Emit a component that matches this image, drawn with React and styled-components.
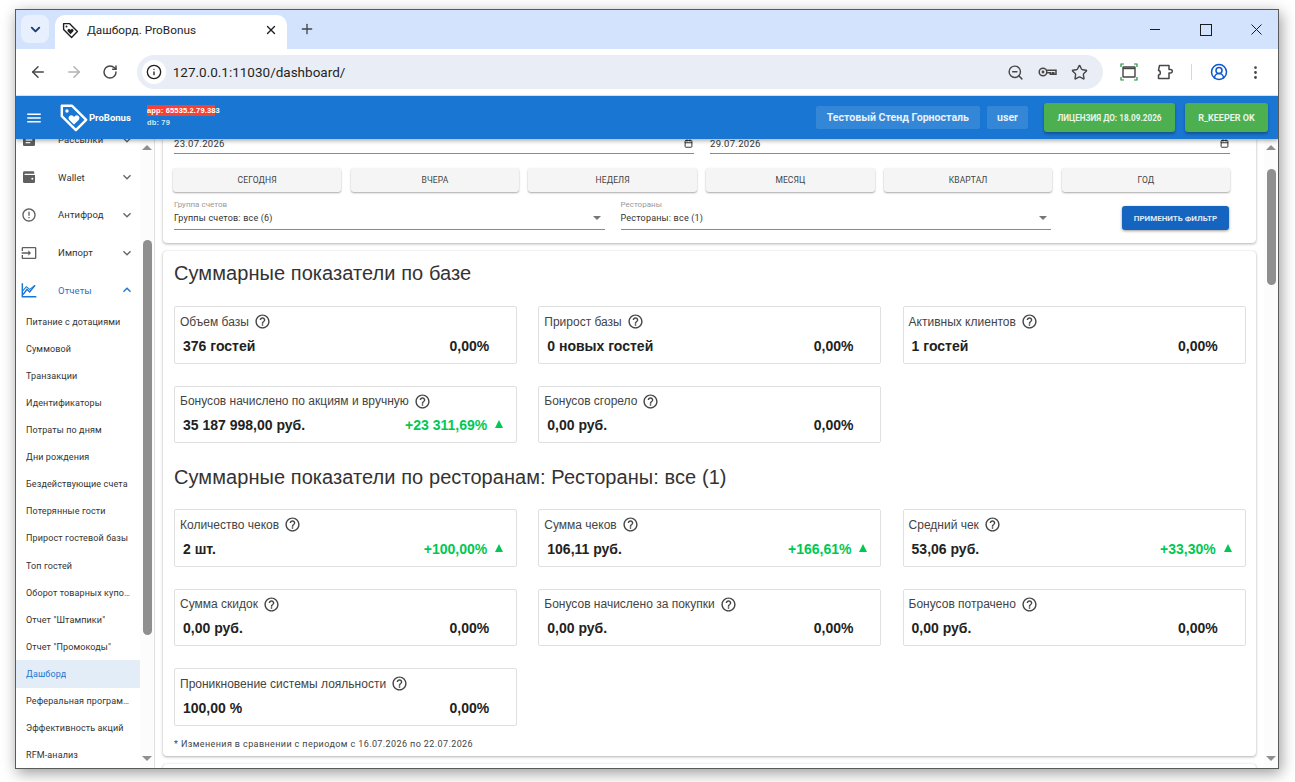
import React from 'react';
import styled, { createGlobalStyle } from 'styled-components';
import { ArrowLeft, ArrowRight, RotateCw, Info, ZoomOut, Star, CircleUserRound, EllipsisVertical, Plus, X, ChevronDown, Calendar } from 'lucide-react';

const GlobalStyle = createGlobalStyle`
  html, body { margin: 0; padding: 0; background: #fff; }
  body { font-family: "Liberation Sans", Arial, sans-serif; }
  * { box-sizing: border-box; }
`;

const Page = styled.div`
  width: 1295px;
  height: 782px;
  padding: 9px 16px 13px 15px;
  overflow: hidden;
`;
const Win = styled.div`
  width: 1264px;
  height: 760px;
  border: 1px solid #5a5a5a;
  box-shadow: 2px 4px 14px rgba(0, 0, 0, 0.4);
  display: flex;
  flex-direction: column;
  background: #fff;
  overflow: hidden;
`;

const TabStrip = styled.div`
  height: 39px;
  background: #d3e3fd;
  display: flex;
  align-items: flex-end;
  padding-left: 5px;
  flex: none;
`;
const GroupBtn = styled.div`
  width: 28px;
  height: 28px;
  margin-bottom: 6px;
  border-radius: 8px;
  background: #e8f0fe;
  color: #1f3a6e;
  display: flex;
  align-items: center;
  justify-content: center;
`;
const Tab = styled.div`
  width: 232px;
  height: 34px;
  margin-left: 6px;
  background: #fff;
  border-radius: 10px 10px 0 0;
  display: flex;
  align-items: center;
  padding: 0 9px 4px 7px;
  color: #1f1f1f;
`;
const TabTitle = styled.span`
  font: 11.8px "Roboto", sans-serif;
  margin-left: 8px;
  flex: 1;
`;
const NewTab = styled.div`
  width: 28px;
  height: 28px;
  margin: 0 0 6px 6px;
  color: #444;
  display: flex;
  align-items: center;
  justify-content: center;
`;
const WinControls = styled.div`
  margin-left: auto;
  align-self: stretch;
  display: flex;
  align-items: center;
  color: #1b1b1b;
  padding-right: 0;
`;
const WinBtn = styled.div`
  width: ${(p) => p.$w}px;
  display: flex;
  justify-content: center;
`;

const Toolbar = styled.div`
  height: 47px;
  flex: none;
  background: #fff;
  border-radius: 10px 10px 0 0;
  display: flex;
  align-items: center;
  padding: 0 5px 0 4px;
  color: #474747;
  border-bottom: 1px solid #e4e8ef;
`;
const NavIcon = styled.div`
  width: 36px;
  margin-left: ${(p) => p.$ml || 0}px;
  display: flex;
  justify-content: center;
  color: ${(p) => (p.$muted ? '#b1b3b5' : p.$blue ? '#0b57d0' : '#474747')};
`;
const Pill = styled.div`
  width: 969px;
  height: 34px;
  margin-left: 9px;
  border-radius: 17px;
  background: #e9eef6;
  display: flex;
  align-items: center;
  padding: 0 8px 0 5px;
`;
const InfoDot = styled.div`
  width: 24px;
  height: 24px;
  border-radius: 50%;
  background: #fff;
  color: #1f1f1f;
  display: flex;
  align-items: center;
  justify-content: center;
`;
const Url = styled.span`
  font: 13.5px "Roboto", sans-serif;
  color: #1f1f1f;
  margin-left: 7px;
  flex: 1;
`;
const PillIcon = styled.div`
  width: 32px;
  display: flex;
  justify-content: center;
  color: #474747;
`;
const Divider = styled.div`
  width: 1px;
  height: 16px;
  background: #c7d9f7;
  margin: 0 9px 0 8px;
`;

const AppBar = styled.header`
  height: 43px;
  flex: none;
  background: #1976d2;
  display: flex;
  align-items: center;
  color: #fff;
  position: relative;
  z-index: 2;
  box-shadow: 0 2px 4px rgba(0, 0, 0, 0.3);
  padding-right: 10px;
`;
const Burger = styled.div`
  width: 27px;
  display: flex;
  justify-content: flex-end;
`;
const Logo = styled.div`
  margin-left: 16px;
  display: flex;
  align-items: center;
  width: 88px;
`;
const LogoText = styled.span`
  font: 700 9.5px "Roboto", sans-serif;
  margin-left: 0;
`;
const Versions = styled.div`
  font: 700 7.5px "Liberation Sans", sans-serif;
  display: flex;
  flex-direction: column;
  align-items: flex-start;
  gap: 2px;
  margin-bottom: 3px;
`;
const AppVersion = styled.span`
  background: #f44336;
  padding: 1px 0 1px 0;
  width: 68px;
  white-space: nowrap;
  letter-spacing: 0.15px;
`;
const DbVersion = styled.span`
  color: #d6e6f7;
  letter-spacing: 0.15px;
`;
const HeadRight = styled.div`
  margin-left: auto;
  display: flex;
  align-items: center;
`;
const Chip = styled.div`
  height: 23px;
  padding: 0 ${(p) => (p.$tight ? 10 : 11)}px;
  margin-right: 7px;
  border-radius: 2px;
  background: rgba(255, 255, 255, 0.12);
  font: 700 10.6px "Roboto", sans-serif;
  display: flex;
  align-items: center;
  color: #e8f1fb;
`;
const GreenBtn = styled.div`
  height: 29px;
  width: ${(p) => p.$w}px;
  margin-left: ${(p) => p.$ml}px;
  background: #4caf50;
  border-radius: 3px;
  box-shadow: 0 2px 3px rgba(0, 0, 0, 0.3);
  font: 700 ${(p) => p.$fs}px "Roboto", sans-serif;
  display: flex;
  align-items: center;
  justify-content: center;
  color: #e8f5e9;
`;

const Body = styled.div`
  flex: 1;
  min-height: 0;
  display: flex;
`;

const Side = styled.aside`
  width: 139px;
  flex: none;
  display: flex;
  border-right: 1px solid #e0e0e0;
  overflow: hidden;
`;
const SideList = styled.div`
  width: 124px;
  flex: none;
  margin-top: -18px;
`;
const Group = styled.div`
  height: 37.6px;
  display: flex;
  align-items: center;
  color: ${(p) => (p.$open ? '#1976d2' : '#5f5f5f')};
`;
const GroupIcon = styled.div`
  width: 42px;
  padding-left: 5px;
  display: flex;
`;
const GroupName = styled.span`
  font: 9.5px "Roboto", sans-serif;
  letter-spacing: 0.1px;
  flex: 1;
  color: ${(p) => (p.$open ? '#1976d2' : '#333')};
`;
const GroupArrow = styled.div`
  width: 21px;
  display: flex;
  color: ${(p) => (p.$open ? '#1976d2' : '#666')};
`;
const Sub = styled.div`
  height: 27.12px;
  padding: 0 7px 0 10px;
  display: flex;
  align-items: center;
  font: 9px "Roboto", sans-serif;
  letter-spacing: 0.12px;
  color: ${(p) => (p.$active ? '#1976d2' : '#333')};
  background: ${(p) => (p.$active ? '#e3edf8' : 'transparent')};
  white-space: nowrap;
  overflow: hidden;
`;
const SubText = styled.span`
  overflow: hidden;
  text-overflow: ellipsis;
`;
const SubList = styled.div`
  margin-top: -1px;
`;

const Track = styled.div`
  flex: none;
  background: #fcfcfc;
  display: flex;
  flex-direction: column;
  align-items: center;
  width: ${(p) => p.$w}px;
`;
const ArrowUp = styled.div`
  width: 0;
  height: 0;
  margin-top: ${(p) => p.$top}px;
  border-left: 5px solid transparent;
  border-right: 5px solid transparent;
  border-bottom: 5px solid #8f8f8f;
`;
const ArrowDown = styled.div`
  width: 0;
  height: 0;
  margin-top: auto;
  margin-bottom: ${(p) => p.$bottom}px;
  border-left: 5px solid transparent;
  border-right: 5px solid transparent;
  border-top: 5px solid #8f8f8f;
`;
const Thumb = styled.div`
  width: 9px;
  height: ${(p) => p.$h}px;
  margin-top: ${(p) => p.$top}px;
  border-radius: 5px;
  background: #8f8f8f;
`;

const Main = styled.main`
  flex: 1;
  min-width: 0;
  padding-left: 8px;
  overflow: hidden;
`;
const Card = styled.section`
  width: 1093px;
  background: #fff;
  border-radius: 4px;
  box-shadow: 0 1px 3px rgba(0, 0, 0, 0.3), 0 0 1px rgba(0, 0, 0, 0.15);
  margin-bottom: 8px;
`;
const FilterCard = styled(Card)`
  height: 104px;
  padding: 0 26px 0 11px;
  border-radius: 0 0 4px 4px;
`;
const DateRow = styled.div`
  display: grid;
  grid-template-columns: 520px 520px;
  gap: 16px;
`;
const DateField = styled.div`
  height: 15px;
  padding: 0 1px 6px 0;
  border-bottom: 1px solid #8a8a8a;
  display: flex;
  align-items: center;
  justify-content: space-between;
  font: 9.5px "Roboto", sans-serif;
  letter-spacing: 0.3px;
  color: #333;
`;
const Quick = styled.div`
  display: grid;
  grid-template-columns: repeat(6, 1fr);
  gap: 9.4px;
  margin: 14px 0 0 -1px;
`;
const QuickBtn = styled.div`
  height: 24px;
  background: #f5f5f5;
  border-radius: 3px;
  box-shadow: 0 1px 2px rgba(0, 0, 0, 0.35);
  font: 8.5px "Roboto", sans-serif;
  letter-spacing: 0.1px;
  color: #444;
  display: flex;
  align-items: center;
  justify-content: center;
`;
const SelectRow = styled.div`
  display: flex;
  align-items: flex-start;
  gap: 16px;
  margin-top: 8px;
`;
const Select = styled.div`
  width: 430.500px;
  height: 30px;
  border-bottom: 1px solid #8a8a8a;
`;
const SelectLabel = styled.div`
  font: 8px "Roboto", sans-serif;
  color: #999;
  line-height: 10px;
`;
const SelectValue = styled.div`
  font: 9px "Roboto", sans-serif;
  letter-spacing: 0.2px;
  color: #333;
  display: flex;
  justify-content: space-between;
  align-items: center;
  margin-top: 3px;
  padding-right: 4px;
`;
const Caret = styled.span`
  width: 0;
  height: 0;
  border-left: 4px solid transparent;
  border-right: 4px solid transparent;
  border-top: 4px solid #777;
`;
const ApplyBtn = styled.div`
  width: 107px;
  height: 24px;
  margin: 6px 1px 0 auto;
  background: #1565c0;
  border-radius: 3px;
  box-shadow: 0 1px 3px rgba(0, 0, 0, 0.4);
  font: 700 8px "Roboto", sans-serif;
  color: #dfeaf7;
  display: flex;
  align-items: center;
  justify-content: center;
`;

const StatsCard = styled(Card)`
  height: 505px;
  padding: 0 11px;
`;
const Heading = styled.h2`
  margin: 0;
  height: ${(p) => p.$h}px;
  padding-top: ${(p) => p.$pt}px;
  font: 400 20px "Liberation Sans", sans-serif;
  letter-spacing: 0.07px;
  color: #333;
  line-height: 24px;
`;
const StatGrid = styled.div`
  display: grid;
  grid-template-columns: repeat(3, 343.2px);
  grid-auto-rows: 57.5px;
  column-gap: 21.1px;
  row-gap: 22px;
`;
const Stat = styled.div`
  border: 1px solid #e0e0e0;
  border-radius: 2px;
  padding: 0 13px 0 5px;
`;
const StatTitle = styled.div`
  height: 29px;
  display: flex;
  align-items: center;
  font: 12px "Liberation Sans", sans-serif;
  color: #444;
  gap: 5px;
`;
const StatLine = styled.div`
  display: flex;
  align-items: center;
  justify-content: space-between;
  padding-left: 3px;
  height: 19px;
  font: 700 14px "Liberation Sans", sans-serif;
  color: #222;
`;
const Delta = styled.span`
  display: flex;
  align-items: center;
  color: ${(p) => (p.$up ? '#00c853' : '#222')};
  padding-right: ${(p) => (p.$up ? 0 : 14)}px;
`;
const UpArrow = styled.span`
  width: 0;
  height: 0;
  margin: 0 0 2px 8px;
  border-left: 4.5px solid transparent;
  border-right: 4.5px solid transparent;
  border-bottom: 8px solid #00c853;
`;
const Footnote = styled.div`
  margin-top: 13px;
  font: 9px "Roboto", sans-serif;
  letter-spacing: 0.4px;
  color: #444;
`;
const NextCard = styled(Card)`
  height: 20px;
`;

const Mi = ({ d, size = 18 }) => (
  <svg width={size} height={size} viewBox="0 0 24 24" fill="currentColor">
    <path d={d} />
  </svg>
);

const paths = {
  more: 'M16.59 8.59 12 13.17 7.41 8.59 6 10l6 6 6-6z',
  less: 'M12 8l-6 6 1.41 1.41L12 10.83l4.59 4.58L18 14z',
  menu: 'M3 18h18v-2H3v2zm0-5h18v-2H3v2zm0-7v2h18V6H3z',
  help: 'M11 18h2v-2h-2v2zm1-16C6.48 2 2 6.48 2 12s4.48 10 10 10 10-4.48 10-10S17.52 2 12 2zm0 18c-4.41 0-8-3.59-8-8s3.59-8 8-8 8 3.59 8 8-3.59 8-8 8zm0-14c-2.21 0-4 1.79-4 4h2c0-1.1.9-2 2-2s2 .9 2 2c0 2-3 1.75-3 5h2c0-2.25 3-2.5 3-5 0-2.21-1.79-4-4-4z',
  error: 'M11 15h2v2h-2zm0-8h2v6h-2zm.99-5C6.47 2 2 6.48 2 12s4.47 10 9.99 10C17.52 22 22 17.52 22 12S17.52 2 11.99 2zM12 20c-4.42 0-8-3.58-8-8s3.58-8 8-8 8 3.58 8 8-3.58 8-8 8z',
  wallet: 'M5 3.500h13a2 2 0 0 1 2 2V7H6a1 1 0 0 0 0 2h15v10a2 2 0 0 1-2 2H5a2 2 0 0 1-2-2V5.500a2 2 0 0 1 2-2zm12 9.500a1.500 1.500 0 1 0 0 3 1.500 1.500 0 0 0 0-3z',
  input: 'M21 3.01H3c-1.1 0-2 .9-2 2V9h2V4.99h18v14.03H3V15H1v4.01c0 1.1.9 1.98 2 1.98h18c1.1 0 2-.88 2-1.98v-14c0-1.11-.9-2-2-2zM11 16l4-4-4-4v3H1v2h10v3z',
  article: 'M19 3H5c-1.1 0-2 .9-2 2v14c0 1.1.9 2 2 2h14c1.1 0 2-.9 2-2V5c0-1.1-.9-2-2-2zm-5 14H7v-2h7v2zm3-4H7v-2h10v2zm0-4H7V7h10v2z',
};

const TagLogo = ({ size, color }) => (
  <svg width={size} height={size} viewBox="0 0 32 32" fill="none">
    <path d="M3 3h11l15 15-11 11L3 14z" stroke={color} strokeWidth="2.6" strokeLinejoin="round" />
    <circle cx="8.5" cy="8.5" r="1.8" fill={color} />
    <path d="M16 23l-5-5a2.900 2.900 0 0 1 4.100-4.100L16 14.800l.900-.900a2.900 2.900 0 0 1 4.100 4.100z" fill={color} />
  </svg>
);

const ChartIcon = () => (
  <svg width="16" height="16" viewBox="0 0 24 24" fill="none" stroke="currentColor" strokeWidth="2.2">
    <path d="M2 2v20h21" />
    <path d="M3 19l6-8 4 4 8-10" />
    <path d="M3 13l5-6 5 4 8-6" strokeWidth="1.6" />
  </svg>
);

const CaptureIcon = () => (
  <svg width="18" height="18" viewBox="0 0 18 18" fill="none">
    <path d="M1 4V1h3M14 1h3v3M17 14v3h-3M4 17H1v-3" stroke="#1e8e3e" strokeWidth="1.2" />
    <rect x="3" y="4" width="12" height="10" rx="0.5" stroke="#444" strokeWidth="1.4" />
    <path d="M3 5.500h12" stroke="#444" strokeWidth="1.4" />
  </svg>
);

const KeyIcon = () => (
  <svg width="19" height="12" viewBox="0 0 19 12" fill="none" stroke="#474747" strokeWidth="1.5">
    <circle cx="5" cy="6" r="3.800" />
    <circle cx="5" cy="6" r="0.700" />
    <path d="M8.800 4.300H18v4h-2.200V6.800h-1.500v1.500h-2V6.800H8.800" />
  </svg>
);

const PuzzleIcon = () => (
  <svg width="18" height="18" viewBox="0 0 18 18" fill="none" stroke="#474747" strokeWidth="1.500" strokeLinejoin="round">
    <path d="M3.500 2.500H13v4h1.500a1.800 1.800 0 0 1 0 3.600H13v5.400H2.500v-3.500c1.800 0 1.800-1 1.800-2.300S4 7.400 2.500 7.400L3.500 2.500z" />
  </svg>
);

const MaxIcon = () => (
  <svg width="12" height="12" viewBox="0 0 12 12" fill="none" stroke="currentColor">
    <rect x="0.500" y="0.500" width="11" height="11" />
  </svg>
);
const MinIcon = () => (
  <svg width="10" height="1" viewBox="0 0 10 1" fill="currentColor">
    <rect width="10" height="1" />
  </svg>
);
const CloseIcon = () => (
  <svg width="11" height="11" viewBox="0 0 11 11" stroke="currentColor" strokeWidth="1">
    <path d="M.500.500l10 10M10.500.500l-10 10" />
  </svg>
);

const subItems = [
  'Питание с дотациями', 'Суммовой', 'Транзакции', 'Идентификаторы', 'Потраты по дням',
  'Дни рождения', 'Бездействующие счета', 'Потерянные гости', 'Прирост гостевой базы',
  'Топ гостей', 'Оборот товарных купонов', 'Отчет "Штампики"', 'Отчет "Промокоды"', 'Дашборд',
  'Реферальная программа', 'Эффективность акций', 'RFM-анализ',
];
const groups = [
  { name: 'Рассылки', icon: paths.article },
  { name: 'Wallet', icon: paths.wallet },
  { name: 'Антифрод', icon: paths.error },
  { name: 'Импорт', icon: paths.input },
];
const quick = ['Сегодня', 'Вчера', 'Неделя', 'Месяц', 'Квартал', 'Год'];

const baseStats = [
  { title: 'Объем базы', value: '376 гостей', delta: '0,00%' },
  { title: 'Прирост базы', value: '0 новых гостей', delta: '0,00%' },
  { title: 'Активных клиентов', value: '1 гостей', delta: '0,00%' },
  { title: 'Бонусов начислено по акциям и вручную', value: '35 187 998,00 руб.', delta: '+23 311,69%', up: true },
  { title: 'Бонусов сгорело', value: '0,00 руб.', delta: '0,00%' },
];
const restStats = [
  { title: 'Количество чеков', value: '2 шт.', delta: '+100,00%', up: true },
  { title: 'Сумма чеков', value: '106,11 руб.', delta: '+166,61%', up: true },
  { title: 'Средний чек', value: '53,06 руб.', delta: '+33,30%', up: true },
  { title: 'Сумма скидок', value: '0,00 руб.', delta: '0,00%' },
  { title: 'Бонусов начислено за покупки', value: '0,00 руб.', delta: '0,00%' },
  { title: 'Бонусов потрачено', value: '0,00 руб.', delta: '0,00%' },
  { title: 'Проникновение системы лояльности', value: '100,00 %', delta: '0,00%' },
];

const StatBox = ({ title, value, delta, up }) => (
  <Stat>
    <StatTitle>
      {title}
      <Mi d={paths.help} size={17} />
    </StatTitle>
    <StatLine>
      <span>{value}</span>
      <Delta $up={up}>
        {delta}
        {up && <UpArrow />}
      </Delta>
    </StatLine>
  </Stat>
);

export default function App() {
  return (
    <Page>
      <GlobalStyle />
      <Win>
        <TabStrip>
          <GroupBtn><ChevronDown size={15} strokeWidth={3} /></GroupBtn>
          <Tab>
            <TagLogo size={17} color="#1f1f1f" />
            <TabTitle>Дашборд. ProBonus</TabTitle>
            <X size={14} strokeWidth={2.4} />
          </Tab>
          <NewTab><Plus size={16} strokeWidth={2} /></NewTab>
          <WinControls>
            <WinBtn $w={46}><MinIcon /></WinBtn>
            <WinBtn $w={56}><MaxIcon /></WinBtn>
            <WinBtn $w={44}><CloseIcon /></WinBtn>
          </WinControls>
        </TabStrip>
        <Toolbar>
          <NavIcon><ArrowLeft size={18} /></NavIcon>
          <NavIcon $muted><ArrowRight size={18} /></NavIcon>
          <NavIcon><RotateCw size={16} strokeWidth={2.2} /></NavIcon>
          <Pill>
            <InfoDot><Info size={16} /></InfoDot>
            <Url>127.0.0.1:11030/dashboard/</Url>
            <PillIcon><ZoomOut size={17} /></PillIcon>
            <PillIcon><KeyIcon /></PillIcon>
            <PillIcon><Star size={17} /></PillIcon>
          </Pill>
          <NavIcon $ml={8}><CaptureIcon /></NavIcon>
          <NavIcon><PuzzleIcon /></NavIcon>
          <Divider />
          <NavIcon $blue><CircleUserRound size={18} /></NavIcon>
          <NavIcon><EllipsisVertical size={17} /></NavIcon>
        </Toolbar>
        <AppBar>
          <Burger><Mi d={paths.menu} size={18} /></Burger>
          <Logo>
            <TagLogo size={30} color="#fff" />
            <LogoText>ProBonus</LogoText>
          </Logo>
          <Versions>
            <AppVersion>app: 65535.2.79.383</AppVersion>
            <DbVersion>db: 79</DbVersion>
          </Versions>
          <HeadRight>
            <Chip>Тестовый Стенд Горносталь</Chip>
            <Chip $tight>user</Chip>
            <GreenBtn $w={131} $ml={9} $fs={8.2}>ЛИЦЕНЗИЯ ДО: 18.09.2026</GreenBtn>
            <GreenBtn $w={83} $ml={10} $fs={9}>R_KEEPER OK</GreenBtn>
          </HeadRight>
        </AppBar>
        <Body>
          <Side>
            <SideList>
              {groups.map((g) => (
                <Group key={g.name}>
                  <GroupIcon><Mi d={g.icon} size={16} /></GroupIcon>
                  <GroupName>{g.name}</GroupName>
                  <GroupArrow><Mi d={paths.more} size={16} /></GroupArrow>
                </Group>
              ))}
              <Group $open>
                <GroupIcon><ChartIcon /></GroupIcon>
                <GroupName $open>Отчеты</GroupName>
                <GroupArrow $open><Mi d={paths.less} size={16} /></GroupArrow>
              </Group>
              <SubList>
                {subItems.map((s) => (
                  <Sub key={s} $active={s === 'Дашборд'}><SubText>{s}</SubText></Sub>
                ))}
              </SubList>
            </SideList>
            <Track $w={14}>
              <ArrowUp $top={6} />
              <Thumb $h={395} $top={90} />
              <ArrowDown $bottom={7} />
            </Track>
          </Side>
          <Main>
            <FilterCard>
              <DateRow>
                <DateField>23.07.2026<Calendar size={9} strokeWidth={2.6} /></DateField>
                <DateField>29.07.2026<Calendar size={9} strokeWidth={2.6} /></DateField>
              </DateRow>
              <Quick>
                {quick.map((q) => <QuickBtn key={q}>{q.toUpperCase()}</QuickBtn>)}
              </Quick>
              <SelectRow>
                <Select>
                  <SelectLabel>Группа счетов</SelectLabel>
                  <SelectValue>Группы счетов: все (6)<Caret /></SelectValue>
                </Select>
                <Select>
                  <SelectLabel>Рестораны</SelectLabel>
                  <SelectValue>Рестораны: все (1)<Caret /></SelectValue>
                </Select>
                <ApplyBtn>ПРИМЕНИТЬ ФИЛЬТР</ApplyBtn>
              </SelectRow>
            </FilterCard>
            <StatsCard>
              <Heading $h={55} $pt={10}>Суммарные показатели по базе</Heading>
              <StatGrid>
                {baseStats.map((s) => <StatBox key={s.title} {...s} />)}
              </StatGrid>
              <Heading $h={66} $pt={22}>Суммарные показатели по ресторанам: Рестораны: все (1)</Heading>
              <StatGrid>
                {restStats.map((s) => <StatBox key={s.title} {...s} />)}
              </StatGrid>
              <Footnote>* Изменения в сравнении с периодом с 16.07.2026 по 22.07.2026</Footnote>
            </StatsCard>
            <NextCard />
          </Main>
          <Track $w={14}>
            <ArrowUp $top={6} />
            <Thumb $h={116} $top={19} />
            <ArrowDown $bottom={7} />
          </Track>
        </Body>
      </Win>
    </Page>
  );
}
